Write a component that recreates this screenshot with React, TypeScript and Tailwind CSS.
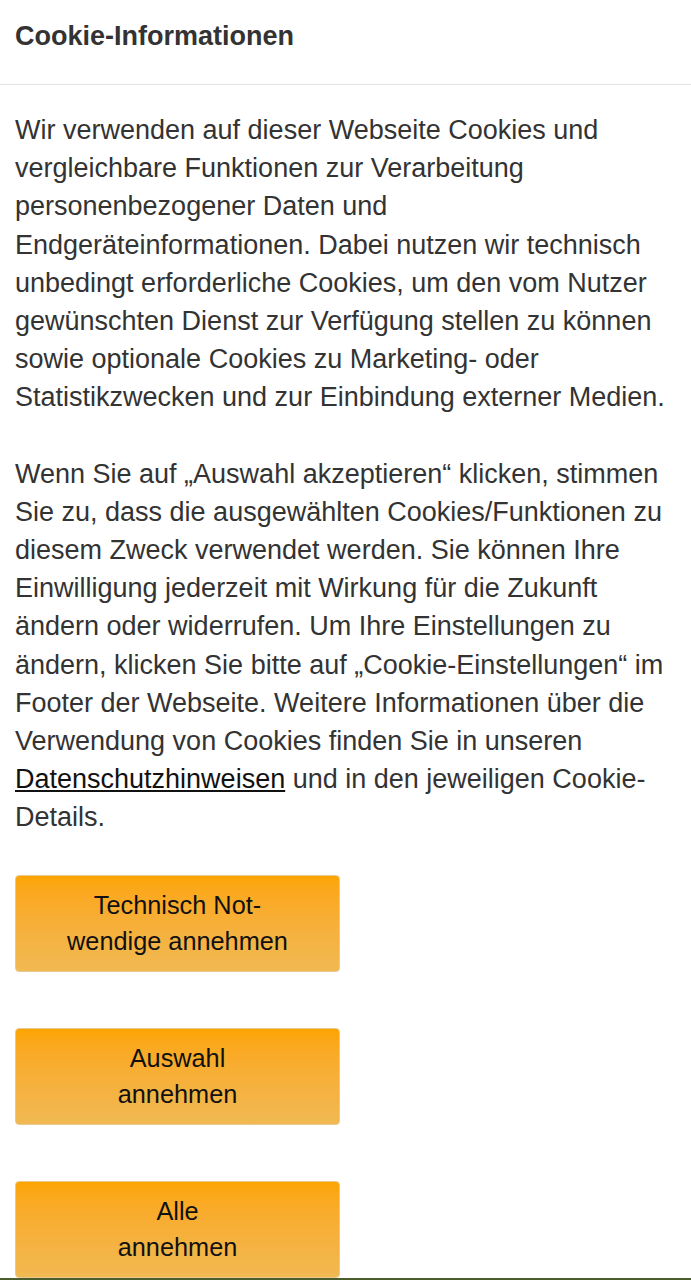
import React from "react";

const btn =
  "w-[325px] rounded-[4px] border border-[#e8c98f] bg-gradient-to-b from-[#fca500] to-[#f1b952] py-[11px] text-center text-[25.3px] leading-[36.5px] text-[#111]";

export default function App() {
  return (
    <div
      className="flex min-h-[1280px] flex-col bg-white text-[#333]"
      style={{ fontFamily: '"Liberation Sans", Arial, sans-serif' }}
    >
      <div className="flex h-[85px] items-center border-b border-[#e3e3e3] px-[15px] pb-[12px]">
        <h1 className="text-[27px] font-bold leading-none text-[#333]">Cookie-Informationen</h1>
      </div>
      <div className="flex-1 px-[15px] pt-[26px] text-[27px] leading-[38.2px]">
        <p>
          Wir verwenden auf dieser Webseite Cookies und vergleichbare Funktionen zur Verarbeitung
          personenbezogener Daten und Endgeräteinformationen. Dabei nutzen wir technisch
          unbedingt erforderliche Cookies, um den vom Nutzer gewünschten Dienst zur Verfügung
          stellen zu können sowie optionale Cookies zu Marketing- oder Statistikzwecken und zur
          Einbindung externer Medien.
        </p>
        <p className="mt-[38px]">
          Wenn Sie auf „Auswahl akzeptieren“ klicken, stimmen Sie zu, dass die ausgewählten
          Cookies/Funktionen zu diesem Zweck verwendet werden. Sie können Ihre Einwilligung
          jederzeit mit Wirkung für die Zukunft ändern oder widerrufen. Um Ihre Einstellungen zu
          ändern, klicken Sie bitte auf „Cookie-Einstellungen“ im Footer der Webseite. Weitere
          Informationen über die Verwendung von Cookies finden Sie in unseren{" "}
          <a className="text-[#111] underline underline-offset-[2px]">Datenschutzhinweisen</a> und in
          den jeweiligen Cookie-Details.
        </p>
        <div className="mt-[38px] flex flex-col gap-[56px]">
          <button className={btn}>
            Technisch Not-
            <br />
            wendige annehmen
          </button>
          <button className={btn}>
            Auswahl
            <br />
            annehmen
          </button>
          <button className={btn}>
            Alle
            <br />
            annehmen
          </button>
        </div>
      </div>
      <div className="h-[3px] bg-[#4a5d2b]" />
    </div>
  );
}
